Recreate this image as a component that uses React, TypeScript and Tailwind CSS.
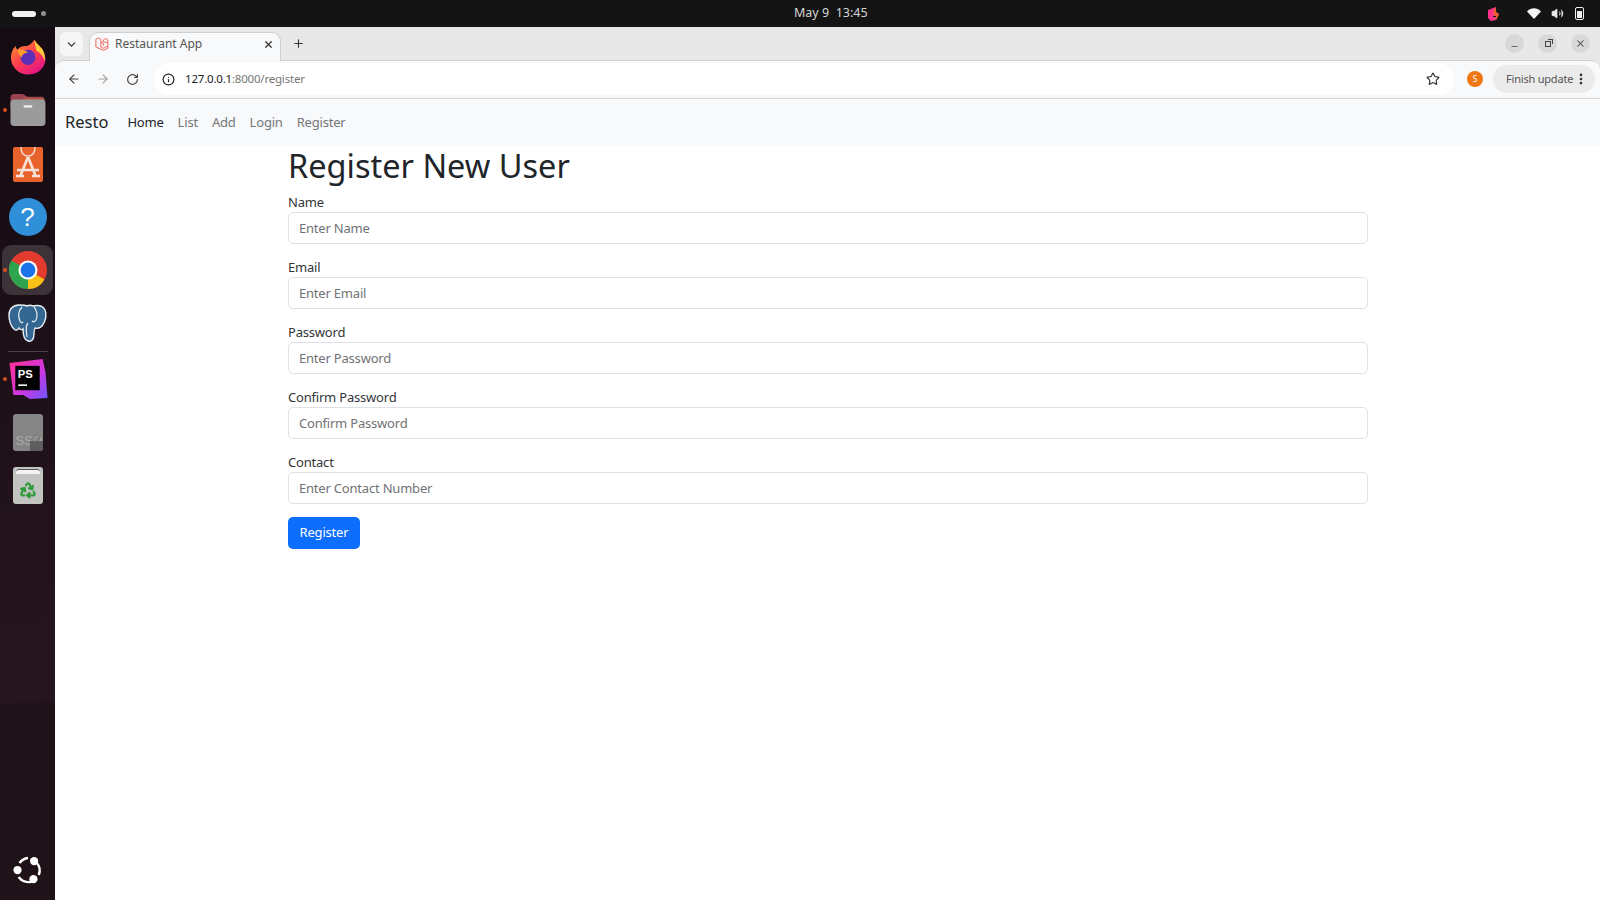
import React from 'react';
import { ArrowLeft, ArrowRight, ChevronDown, Info, Minus, MoreVertical, Plus, Recycle, RotateCw, Star, Volume2, X } from 'lucide-react';

const uiFont = "font-['Noto_Sans',sans-serif]";

const fields = [
  { label: 'Name', placeholder: 'Enter Name' },
  { label: 'Email', placeholder: 'Enter Email' },
  { label: 'Password', placeholder: 'Enter Password' },
  { label: 'Confirm Password', placeholder: 'Confirm Password' },
  { label: 'Contact', placeholder: 'Enter Contact Number' },
];

const navLinks = ['List', 'Add', 'Login', 'Register'];

const Firefox = () => (
  <svg width="36" height="37" viewBox="0 0 38 38">
    <defs>
      <linearGradient id="ffbody" x1="0" y1="0" x2="0.7" y2="1">
        <stop offset="0" stopColor="#ff9a2e" />
        <stop offset="0.55" stopColor="#ff3f4c" />
        <stop offset="1" stopColor="#e31587" />
      </linearGradient>
    </defs>
    <path d="M26 1c1 4 5 6 8 10 3 5 4 10 3 14-2 8-9 13-18 13C9 38 1 30 1 20 1 15 3 11 6 8c0 2 1 3 2 4 2-3 5-4 8-4 4 0 6-2 10-7z" fill="url(#ffbody)" />
    <path d="M26 1c1 4 5 6 8 10 3 5 3 9 3 13-2-5-5-9-9-11-1-4-2-8-2-12z" fill="#ffc93c" />
    <circle cx="19" cy="20" r="8" fill="#5b2fb8" />
    <path d="M8 12c4-1 8 0 11 3-4 0-6 2-7 5-2-2-4-5-4-8z" fill="#ff9a2e" />
  </svg>
);

const Folder = () => (
  <svg width="37" height="34" viewBox="0 0 38 36">
    <path d="M1 5a4 4 0 0 1 4-4h9l5 3h15a3 3 0 0 1 3 3v8H1z" fill="#9b4252" />
    <path d="M14 5h20a3 3 0 0 1 3 3v6H14z" fill="#b2553f" />
    <rect x="1" y="7" width="37" height="28" rx="4" fill="#9b9b9b" />
    <rect x="15" y="13" width="9" height="2.4" fill="#f2f2f2" />
  </svg>
);

const AppCenter = () => (
  <svg width="30" height="36" viewBox="0 0 30 36">
    <rect x="0" y="1" width="30" height="35" rx="2" fill="#e8622c" />
    <path d="M8 1c0 6 3 9 7 9s7-3 7-9" fill="none" stroke="#f6d6c6" strokeWidth="1.6" />
    <path d="M15 11 7 31M15 11l8 20M4 24h22M3 30h8M19 30h8" stroke="#f8e3d8" strokeWidth="2.6" fill="none" />
  </svg>
);

const Help = () => (
  <div className="flex h-[38px] w-[38px] items-center justify-center rounded-full bg-[#2f8fd8] text-[26px] leading-none text-white font-['Liberation_Sans',sans-serif]">
    ?
  </div>
);

const Chrome = () => (
  <svg width="38" height="38" viewBox="0 0 38 38">
    <circle cx="19" cy="19" r="19" fill="#e33b2e" />
    <path d="M19 19 35.5 28.5A19 19 0 0 1 19 38z" fill="#f9c118" />
    <path d="M19 19 19 38A19 19 0 0 1 2.5 9.5z" fill="#2ea44f" />
    <circle cx="19" cy="19" r="9.6" fill="#ffffff" />
    <circle cx="19" cy="19" r="7.4" fill="#1a73e8" />
  </svg>
);

const Postgres = () => (
  <svg width="40" height="40" viewBox="0 0 40 40">
    <path
      d="M11 2C5 2 1 6 1 12c0 6 2 11 5 14 2 2 4 1 5-1 1 2 3 2 4 1 0 5 1 11 5 12 4 1 6-2 6-7 0-3 0-4 1-6 3 1 5 0 7-2 4-5 5-12 3-16-2-4-7-5-12-4-2-1-4-1-6 0-2-1-5-1-8-1z"
      fill="#336791"
      stroke="#e9eef2"
      strokeWidth="1.4"
    />
    <path d="M14 4c-4 4-4 10-2 14 1 2 2 2 3 1M26 4c3 3 4 9 2 13-1 2-3 2-4 1M20 20c-2 2-2 8-1 14" fill="none" stroke="#e9eef2" strokeWidth="1.2" />
  </svg>
);

const PhpStorm = () => (
  <svg width="42" height="41" viewBox="0 0 42 42">
    <defs>
      <linearGradient id="psbg" x1="0" y1="0" x2="1" y2="1">
        <stop offset="0" stopColor="#ff318c" />
        <stop offset="0.55" stopColor="#d136e0" />
        <stop offset="1" stopColor="#6b57ff" />
      </linearGradient>
    </defs>
    <path d="M2 4 36 0l3 14 2 26-18 1-7-4H6z" fill="url(#psbg)" />
    <rect x="8" y="7" width="25" height="25" fill="#000000" />
    <text x="10.5" y="19.5" fontSize="11.5" fontWeight="700" fill="#ffffff" fontFamily="Liberation Sans, sans-serif">
      PS
    </text>
    <rect x="11" y="26" width="9" height="1.6" fill="#ffffff" />
  </svg>
);

const SsdDisk = () => (
  <div className="relative h-[37px] w-[30px] overflow-hidden rounded-[3px] bg-[#858585]">
    <span className="absolute bottom-[4px] left-[3px] text-[13px] leading-none text-[#a9a9a9] font-['Liberation_Sans',sans-serif]">
      SSD
    </span>
    <div className="absolute bottom-0 right-0 h-[10px] w-[13px] bg-[#5d5d5d]" />
    <div className="absolute bottom-[9px] right-[3px] h-[7px] w-[7px] rounded-t-full border border-b-0 border-[#777777]" />
  </div>
);

const Trash = () => (
  <div className="relative flex h-[37px] w-[30px] items-center justify-center rounded-[3px] bg-[#c2c4c2]">
    <div className="absolute left-[3px] right-[3px] top-[2px] h-[5px] rounded-t-[3px] border-t border-[#555555] bg-[#f4f4f4]" />
    <Recycle className="mt-[8px] h-[18px] w-[18px] text-[#2f9a3c]" strokeWidth={3} />
  </div>
);

const UbuntuLogo = () => (
  <svg width="30" height="30" viewBox="0 0 32 32">
    <path d="M7 8.5A13 13 0 0 1 16 3.2M25 8a13 13 0 0 1 2.5 13.4M20 28.4A13 13 0 0 1 6 23.5" fill="none" stroke="#ffffff" strokeWidth="2.6" />
    <circle cx="22.5" cy="6.5" r="4.4" fill="#ffffff" />
    <circle cx="4.8" cy="16" r="4.4" fill="#ffffff" />
    <circle cx="21.8" cy="25.8" r="4.4" fill="#ffffff" />
  </svg>
);

const LaravelMark = () => (
  <svg width="14" height="14" viewBox="0 0 24 24" fill="none" stroke="#ef5a52" strokeWidth="1.6">
    <path d="M1.5 4 6 1.5 10 4v13l4.5 2.5L22 15v-4.5l-4-2.2-3.7 2.2V15M1.5 4v13l13 6L22 19.5V15M10 10l4.3-2.2V5l4-2.3 3.7 2.3v5.5" />
  </svg>
);

const DockItem = ({ children, dot, active, h }: { children: React.ReactNode; dot?: boolean; active?: boolean; h: string }) => (
  <div className={`relative flex w-full items-center justify-center ${h}`}>
    {active && <div className="absolute left-[2px] top-[2px] bottom-[2px] right-[2px] rounded-[9px] bg-[#3b3338]" />}
    {dot && <div className="absolute left-[3px] top-1/2 h-[4px] w-[4px] -translate-y-1/2 rounded-full bg-[#d9501e]" />}
    <div className="relative flex">{children}</div>
  </div>
);

const Dock = () => (
  <div className="flex w-[55px] shrink-0 flex-col items-center bg-[linear-gradient(176deg,#150b12_0%,#26151f_77%,#1f1219_77.5%,#1f1219_100%)] pt-[3px]">
    <DockItem h="h-[53px]">
      <Firefox />
    </DockItem>
    <DockItem h="h-[54px]" dot>
      <Folder />
    </DockItem>
    <DockItem h="h-[53px]">
      <AppCenter />
    </DockItem>
    <DockItem h="h-[53px]">
      <Help />
    </DockItem>
    <DockItem h="h-[54px]" dot active>
      <Chrome />
    </DockItem>
    <DockItem h="h-[52px]">
      <Postgres />
    </DockItem>
    <div className="mt-[2px] h-px w-[40px] bg-[#4a3d46]" />
    <DockItem h="h-[54px]" dot>
      <PhpStorm />
    </DockItem>
    <DockItem h="h-[53px]">
      <SsdDisk />
    </DockItem>
    <DockItem h="h-[53px]">
      <Trash />
    </DockItem>
    <div className="mt-auto w-full">
      <DockItem h="h-[60px]">
        <UbuntuLogo />
      </DockItem>
    </div>
  </div>
);

const TopBar = () => (
  <div className="relative flex h-[27px] shrink-0 items-center justify-between bg-[#141414] pl-[12px] pr-[16px]">
    <div className="flex items-center gap-[5px]">
      <div className="h-[6px] w-[24px] rounded-full bg-[#f2f2f2]" />
      <div className="h-[5px] w-[5px] rounded-full bg-[#8f8f8f]" />
    </div>
    <div className="absolute left-[794px] top-[4px] text-[12.5px] leading-[17px] text-[#d6d6d6]">May 9&nbsp;&nbsp;13:45</div>
    <div className="flex items-center">
      <svg className="mr-[28px]" width="12" height="14" viewBox="0 0 12 14">
        <path d="M1 3 9 0v5l3 2-3 6-5 1-3-3z" fill="#ff318c" />
        <path d="M6 5 9 0v5l3 2-3 6z" fill="#e8622c" />
        <rect x="6" y="9" width="3" height="1" fill="#111111" />
      </svg>
      <svg className="mr-[10px]" width="14" height="11" viewBox="0 0 14 11">
        <path d="M0 3.4C4-.9 10-.9 14 3.4L7 11z" fill="#f5f5f5" />
      </svg>
      <Volume2 className="mr-[11px] h-[13px] w-[13px] text-[#eeeeee]" fill="#eeeeee" strokeWidth={1.5} />
      <div className="relative h-[13px] w-[9px] rounded-[2px] border border-[#eeeeee]">
        <div className="absolute bottom-[1px] left-[1px] right-[1px] h-[7px] bg-[#eeeeee]" />
      </div>
    </div>
  </div>
);

const TabStrip = () => (
  <div className="flex h-[33px] shrink-0 items-end bg-[#e8e8e8] pl-[5px]">
    <div className="mb-[4px] flex h-[24px] w-[23px] items-center justify-center rounded-[6px] bg-[#f6f6f6]">
      <ChevronDown className="h-[13px] w-[13px] text-[#333333]" strokeWidth={2.4} />
    </div>
    <div className="relative z-10 -mb-px ml-[6px] flex h-[29px] w-[192px] items-center rounded-t-[9px] border border-b-0 border-[#cfcfcf] bg-[#f8f9fa] pb-[6px] pl-[5px] pr-[6px]">
      <LaravelMark />
      <span className="ml-[6px] text-[12px] text-[#555555]">Restaurant App</span>
      <X className="ml-auto h-[11px] w-[11px] text-[#333333]" strokeWidth={2.6} />
    </div>
    <Plus className="mb-[10px] ml-[11px] h-[13px] w-[13px] text-[#333333]" strokeWidth={2} />
    <div className="mb-[7px] ml-auto mr-[10px] flex items-center gap-[14px]">
      <div className="flex h-[19px] w-[19px] items-center justify-center rounded-full bg-[#d8d8d8]">
        <Minus className="mt-[5px] h-[9px] w-[9px] text-[#444444]" strokeWidth={2} />
      </div>
      <div className="flex h-[19px] w-[19px] items-center justify-center rounded-full bg-[#d8d8d8]">
        <div className="relative mt-[1px] h-[6px] w-[6px] border border-[#444444] before:absolute before:-right-[3px] before:-top-[3px] before:h-[5px] before:w-[5px] before:border-r before:border-t before:border-[#444444]" />
      </div>
      <div className="flex h-[19px] w-[19px] items-center justify-center rounded-full bg-[#d8d8d8]">
        <X className="h-[11px] w-[11px] text-[#444444]" strokeWidth={2.2} />
      </div>
    </div>
  </div>
);

const Toolbar = () => (
  <div className="h-[39px] shrink-0 bg-[#e8e8e8]">
    <div className="flex h-full items-center rounded-t-[9px] border-b border-t border-b-[#d6d6d6] border-t-[#cfcfcf] bg-[#f8f9fa] pb-[1px] pl-[12px]">
      <ArrowLeft className="h-[14px] w-[14px] text-[#444444]" strokeWidth={2} />
      <ArrowRight className="ml-[15px] h-[14px] w-[14px] text-[#a0a0a0]" strokeWidth={2} />
      <RotateCw className="ml-[16px] h-[13px] w-[13px] text-[#444444]" strokeWidth={2.2} />
      <div className="ml-[15px] flex h-[32px] flex-1 items-center rounded-full bg-white pl-[8px] pr-[14px]">
        <Info className="h-[13px] w-[13px] text-[#222222]" strokeWidth={2.2} />
        <span className="ml-[10px] text-[11.5px] tracking-[-0.2px] text-[#222222]">
          127.0.0.1<span className="text-[#777777]">:8000/register</span>
        </span>
        <Star className="ml-auto h-[14px] w-[14px] text-[#333333]" strokeWidth={2} />
      </div>
      <div className="ml-[13px] flex h-[16px] w-[16px] items-center justify-center rounded-full bg-[#ef7610] text-[9px] text-white">S</div>
      <div className="ml-[10px] mr-[5px] flex h-[28px] w-[102px] items-center rounded-full bg-[#ebebeb] pl-[13px] pr-[7px]">
        <span className="text-[11px] tracking-[-0.2px] text-[#555555]">Finish update</span>
        <MoreVertical className="ml-auto h-[14px] w-[14px] text-[#333333]" strokeWidth={2.6} />
      </div>
    </div>
  </div>
);

const Navbar = () => (
  <nav className="flex h-[47px] shrink-0 items-center bg-[#f8f9fa] pl-[10px]">
    <a className="mr-[19px] text-[16.5px] text-[#212529]">Resto</a>
    <a className="text-[13px] tracking-[-0.2px] text-[#212529]">Home</a>
    {navLinks.map((link) => (
      <a key={link} className="ml-[14px] text-[13px] tracking-[-0.2px] text-[#74777a]">
        {link}
      </a>
    ))}
  </nav>
);

const RegisterForm = () => (
  <div className="ml-[233px] w-[1080px]">
    <h1 className="mt-[1px] text-[32.5px] leading-[38px] text-[#212529]">Register New User</h1>
    <form className="mt-[7px]">
      {fields.map((field) => (
        <div key={field.label} className="mb-[13px]">
          <label className="block text-[13px] leading-[20px] tracking-[-0.2px] text-[#333639]">{field.label}</label>
          <input
            placeholder={field.placeholder}
            className="block h-[32px] w-full rounded-[5px] border border-[#dee2e6] bg-white px-[10px] pb-[1px] text-[13px] tracking-[-0.2px] text-[#212529] placeholder:text-[#6f7276]"
          />
        </div>
      ))}
      <button type="button" className="h-[32px] w-[72px] rounded-[5px] bg-[#0d6efd] text-[13px] tracking-[-0.2px] text-white">
        Register
      </button>
    </form>
  </div>
);

export default function App() {
  return (
    <div className={`flex h-[900px] w-[1600px] flex-col overflow-hidden bg-white ${uiFont}`}>
      <TopBar />
      <div className="flex min-h-0 flex-1">
        <Dock />
        <div className="flex min-w-0 flex-1 flex-col">
          <TabStrip />
          <Toolbar />
          <Navbar />
          <RegisterForm />
        </div>
      </div>
    </div>
  );
}
